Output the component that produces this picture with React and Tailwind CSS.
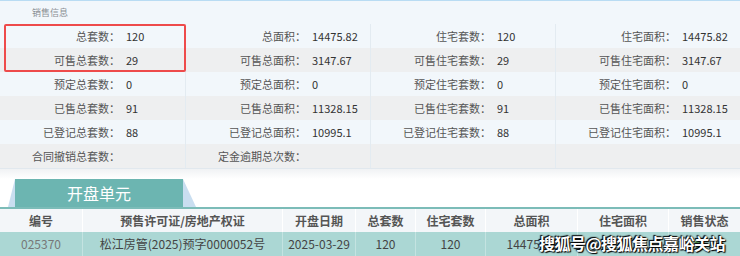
import React from 'react';

const ROWS = [
  [['总套数', '120'], ['总面积', '14475.82'], ['住宅套数', '120'], ['住宅面积', '14475.82']],
  [['可售总套数', '29'], ['可售总面积', '3147.67'], ['可售住宅套数', '29'], ['可售住宅面积', '3147.67']],
  [['预定总套数', '0'], ['预定总面积', '0'], ['预定住宅套数', '0'], ['预定住宅面积', '0']],
  [['已售总套数', '91'], ['已售总面积', '11328.15'], ['已售住宅套数', '91'], ['已售住宅面积', '11328.15']],
  [['已登记总套数', '88'], ['已登记总面积', '10995.1'], ['已登记住宅套数', '88'], ['已登记住宅面积', '10995.1']],
  [['合同撤销总套数', ''], ['定金逾期总次数', ''], null, null],
];

const COLS = [
  { name: '编号', w: 'w-[82px]' },
  { name: '预售许可证/房地产权证', w: 'w-[200px]' },
  { name: '开盘日期', w: 'w-[73px]' },
  { name: '总套数', w: 'w-[60px]' },
  { name: '住宅套数', w: 'w-[70px]' },
  { name: '总面积', w: 'w-[92px]' },
  { name: '住宅面积', w: 'w-[91px]' },
  { name: '销售状态', w: 'flex-1' },
];

const DATA = ['025370', '松江房管(2025)预字0000052号', '2025-03-29', '120', '120', '14475.82', '', ''];

function InfoCell({ item, first }) {
  return (
    <div className={`flex items-center h-full ${first ? '' : 'border-l border-[#e3ebf1]'}`}>
      {item && (
        <>
          <span className="w-[120px] text-right text-[#555]">{item[0]}：</span>
          <span className="pl-[6px] text-[#333]">{item[1]}</span>
        </>
      )}
    </div>
  );
}

export default function App() {
  return (
    <div
      className="relative w-[740px] h-[256px] overflow-hidden bg-white text-[11px]"
      style={{ fontFamily: '"Noto Sans CJK SC", "Noto Sans", sans-serif' }}
    >
      <div className="border-t border-[#b9dcf3] bg-[#f2f7fb]">
        <div className="h-[23px] flex items-center pl-[32px] text-[9px] text-[#8a8f94]">销售信息</div>
        {ROWS.map((row, i) => (
          <div
            key={i}
            className={`grid grid-cols-[185px_185px_185px_185px] h-[24px] ${i % 2 ? 'bg-[#eeeff0]' : ''}`}
          >
            {row.map((item, j) => (
              <InfoCell key={j} item={item} first={j === 0} />
            ))}
          </div>
        ))}
      </div>
      <div className="h-[1px] bg-[#e1e8ee]" />
      <div className="h-[10px] bg-gradient-to-b from-[#f0f2f4] to-white" />

      <div className="h-[28px] flex">
        <div className="ml-[8px] w-[188px] h-full bg-[#c9def0] [clip-path:polygon(7px_0,175px_0,188px_100%,0_100%)] flex">
          <div className="ml-[7px] w-[168px] h-full bg-[#6cb5b1] flex items-center justify-center text-white text-[16px]">
            开盘单元
          </div>
        </div>
      </div>
      <div className="h-[2px] bg-[#7cbcb8]" />

      <div className="flex h-[23px] bg-[#f3f6f9] text-[12px] font-bold text-[#555]">
        {COLS.map((c, i) => (
          <div key={i} className={`${c.w} flex items-center justify-center ${i ? 'border-l border-white' : ''}`}>
            {c.name}
          </div>
        ))}
      </div>
      <div className="flex h-[24px] bg-[#abd7d4] text-[12px] text-[#444]">
        {COLS.map((c, i) => (
          <div
            key={i}
            className={`${c.w} flex items-center justify-center ${i ? 'border-l border-[#c4e3e1]' : 'text-[#777]'}`}
          >
            {i === 7 ? <span className="text-[#3a9a3a] text-[11px] ml-[-20px]">在售</span> : DATA[i]}
          </div>
        ))}
      </div>

      <div className="absolute left-[4px] top-[24px] w-[182px] h-[48px] border-2 border-[#ee4b4b] rounded-[2px]" />
      <div
        className="absolute left-[539px] top-[232px] text-white text-[16px] font-bold tracking-[-0.5px] leading-[22px]"
        style={{ textShadow: '0 0 2px #000, 1px 1px 1px #000, -1px -1px 1px #000' }}
      >
        搜狐号@搜狐焦点嘉峪关站
      </div>
    </div>
  );
}
